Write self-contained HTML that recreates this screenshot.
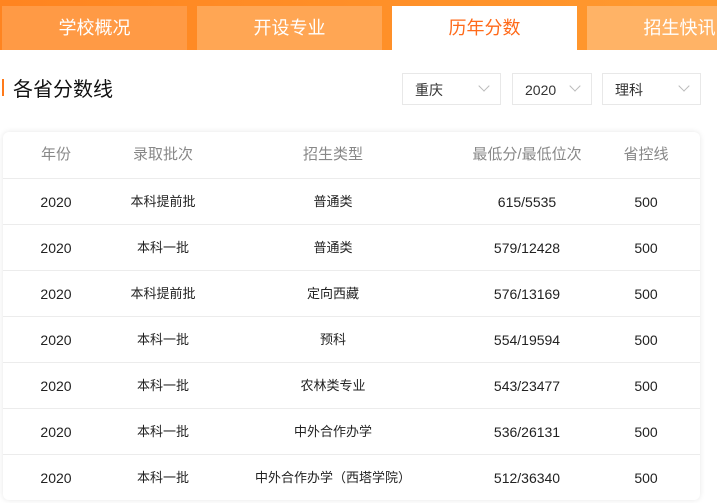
<!DOCTYPE html>
<html><head><meta charset="utf-8"><style>
body{margin:0;width:717px;height:503px;overflow:hidden;background:#fff;font-family:"Liberation Sans","Noto Sans CJK SC",sans-serif;position:relative}
.bar{position:absolute;left:0;top:0;width:717px;height:50px;background:linear-gradient(90deg,#ff8420,#ff9a30)}
.tab{position:absolute;top:6px;height:44px;line-height:44px;text-align:center;color:#fff;font-size:18px;width:185px}
.sel{position:absolute;top:73px;height:32px;border:1px solid #e8e8e8;box-sizing:border-box;font-size:14px;color:#333;line-height:32px;padding-left:12px}
.sel i{position:absolute;right:12px;top:8px;width:7px;height:7px;border-right:1px solid #bbb;border-bottom:1px solid #bbb;transform:rotate(45deg)}
.card{position:absolute;left:3px;top:132px;width:697px;height:368px;background:#fff;border-radius:6px;box-shadow:0 0 6px rgba(0,0,0,.1)}
.row{position:absolute;left:0;width:697px;height:46px;border-top:1px solid #ececec;font-size:13px;color:#222}
.row span{position:absolute;top:0;line-height:46px;transform:translateX(-50%);white-space:nowrap}
.row span.n{font-size:14px}
.hd{border-top:none;color:#888;font-size:15px}
</style></head><body>
<div class="bar"></div>
<div class="tab" style="left:2px;background:#ff9a45">学校概况</div>
<div class="tab" style="left:197px;background:#ffa654">开设专业</div>
<div class="tab" style="left:392px;background:#fff;color:#ff6a1a">历年分数</div>
<div class="tab" style="left:587px;background:#ffb366">招生快讯</div>
<div style="position:absolute;left:2px;top:79px;width:2px;height:17px;background:#ff7a1a"></div>
<div style="position:absolute;left:13px;top:73px;font-size:20px;color:#111">各省分数线</div>
<div class="sel" style="left:402px;width:99px">重庆<i></i></div>
<div class="sel" style="left:512px;width:80px">2020<i></i></div>
<div class="sel" style="left:602px;width:99px">理科<i></i></div>
<div class="card">
<div class="row hd" style="top:0"><span style="left:53px">年份</span><span style="left:160px">录取批次</span><span style="left:330px">招生类型</span><span style="left:524px">最低分/最低位次</span><span style="left:643px">省控线</span></div>
<div class="row" style="top:46px"><span class="n" style="left:53px">2020</span><span style="left:160px">本科提前批</span><span style="left:330px">普通类</span><span class="n" style="left:524px">615/5535</span><span class="n" style="left:643px">500</span></div>
<div class="row" style="top:92px"><span class="n" style="left:53px">2020</span><span style="left:160px">本科一批</span><span style="left:330px">普通类</span><span class="n" style="left:524px">579/12428</span><span class="n" style="left:643px">500</span></div>
<div class="row" style="top:138px"><span class="n" style="left:53px">2020</span><span style="left:160px">本科提前批</span><span style="left:330px">定向西藏</span><span class="n" style="left:524px">576/13169</span><span class="n" style="left:643px">500</span></div>
<div class="row" style="top:184px"><span class="n" style="left:53px">2020</span><span style="left:160px">本科一批</span><span style="left:330px">预科</span><span class="n" style="left:524px">554/19594</span><span class="n" style="left:643px">500</span></div>
<div class="row" style="top:230px"><span class="n" style="left:53px">2020</span><span style="left:160px">本科一批</span><span style="left:330px">农林类专业</span><span class="n" style="left:524px">543/23477</span><span class="n" style="left:643px">500</span></div>
<div class="row" style="top:276px"><span class="n" style="left:53px">2020</span><span style="left:160px">本科一批</span><span style="left:330px">中外合作办学</span><span class="n" style="left:524px">536/26131</span><span class="n" style="left:643px">500</span></div>
<div class="row" style="top:322px"><span class="n" style="left:53px">2020</span><span style="left:160px">本科一批</span><span style="left:330px">中外合作办学（西塔学院）</span><span class="n" style="left:524px">512/36340</span><span class="n" style="left:643px">500</span></div>
</div>
</body></html>
